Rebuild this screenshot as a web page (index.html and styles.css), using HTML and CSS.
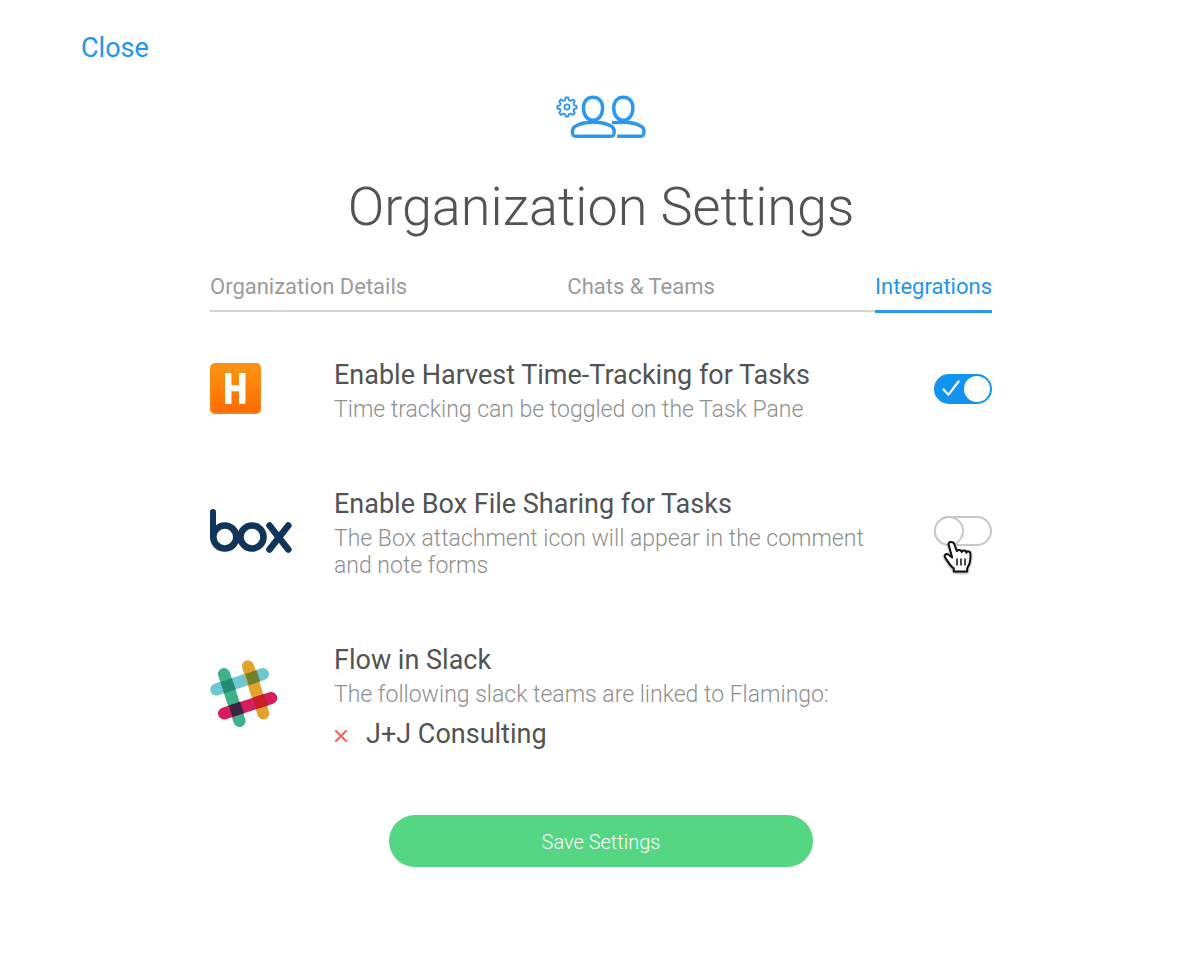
FILE: index.html
```html
<!DOCTYPE html>
<html lang="en">
<head>
  <meta charset="UTF-8" />
  <meta name="viewport" content="width=device-width, initial-scale=1.0"/>
  <title>Organization Settings</title>
  <link rel="stylesheet" href="styles.css">
</head>
<body>
  <a class="close" href="#">Close</a>

  <div class="container">
    <header class="header">
      <svg class="header-icon" width="92" height="46" viewBox="555 94 92 46" fill="none" stroke="#2b97ee" stroke-width="3.400" stroke-linecap="round" stroke-linejoin="round" aria-hidden="true">
        <!-- gear -->
        <path stroke-width="1.8" d="M565.8 97.500h2.400l.7 2.700 1.700.7 2.300-1.400 1.900 1.900-1.400 2.300.7 1.700 2.500.6v2.400l-2.500.6-.7 1.700 1.400 2.300-1.900 1.900-2.300-1.400-1.700.7-.7 2.300h-2.400l-.7-2.300-1.700-.7-2.300 1.400-1.900-1.900 1.400-2.300-.7-1.700-2.500-.6v-2.400l2.500-.6.7-1.700-1.400-2.300 1.900-1.900 2.300 1.400 1.700-.7z"/>
        <circle cx="567" cy="107" r="2.600" stroke-width="1.700"/>
        <!-- people -->
        <path d="M593 97.200c5.700 0 9.600 4.200 9.600 10.600 0 7-3.500 12.400-9.600 12.400s-9.600-5.400-9.600-12.400c0-6.400 3.900-10.600 9.600-10.600z"/>
        <path d="M623.300 97.200c5.700 0 9.600 4.200 9.600 10.600 0 7-3.500 12.400-9.600 12.400s-9.600-5.400-9.600-12.400c0-6.400 3.900-10.600 9.600-10.600z"/>
        <path d="M593.300 122.200c-8 0-14.500 1.800-18.300 4.200-2.200 1.500-2.600 3-2.600 5.400 0 3.400.6 4.500 3.600 4.500h34.600c3 0 3.600-1.100 3.600-4.500 0-2.400-.4-3.900-2.600-5.400-3.800-2.400-10.300-4.200-18.300-4.200z"/>
        <path stroke-linecap="butt" d="M612 122.300c1.500.3 3.200.4 5 .2 2-.2 4.200-.3 6.300-.3 8 0 14.300 1.800 18.100 4.200 2.200 1.500 2.600 3 2.600 5.400 0 3.400-.6 4.500-3.600 4.500H617.200"/>
      </svg>
      <h1>Organization Settings</h1>
    </header>

    <nav class="tabs">
      <a class="tab" href="#">Organization Details</a>
      <a class="tab" href="#">Chats &amp; Teams</a>
      <a class="tab active" href="#">Integrations</a>
    </nav>

    <form class="settings">
      <!-- Harvest -->
      <section class="row">
        <div class="logo">
          <svg width="51" height="51" viewBox="0 0 51 51" role="img" aria-label="Harvest">
            <defs>
              <linearGradient id="harvest" x1="0" y1="0" x2="0" y2="1">
                <stop offset="0" stop-color="#fb9713"/>
                <stop offset="1" stop-color="#fc6a03"/>
              </linearGradient>
            </defs>
            <rect width="51" height="51" rx="5" fill="url(#harvest)"/>
            <rect x="1" y="1" width="49" height="49" rx="4" fill="none" stroke="#f98b1d" stroke-width="1"/>
            <g fill="#fff">
              <rect x="15" y="10" width="6.500" height="31" rx="1"/>
              <rect x="29" y="10" width="6.500" height="31" rx="1"/>
              <rect x="20" y="22.300" width="11" height="6"/>
            </g>
          </svg>
        </div>
        <div class="info">
          <h2><label for="harvestToggle">Enable Harvest Time-Tracking for Tasks</label></h2>
          <p>Time tracking can be toggled on the Task Pane</p>
        </div>
        <div class="switch">
          <input type="checkbox" id="harvestToggle" checked>
          <svg class="check" width="18" height="16" viewBox="0 0 18 16" fill="none" stroke="#fff" stroke-width="2.200" stroke-linecap="round" stroke-linejoin="round" aria-hidden="true"><path d="M1.500 9.500l5 5.200L16.500 1.500"/></svg>
        </div>
      </section>

      <!-- Box -->
      <section class="row">
        <div class="logo">
          <svg width="82" height="44" viewBox="0 0 82 44" fill="none" stroke="#113459" stroke-width="6.600" stroke-linecap="round" role="img" aria-label="Box">
            <path stroke-width="6" d="M3 3v25"/>
            <circle cx="14.800" cy="28" r="11.500"/>
            <circle cx="42" cy="28" r="11.500"/>
            <path d="M59.500 16.500L78.300 40.500M78.300 16.500L59.500 40.500"/>
          </svg>
        </div>
        <div class="info">
          <h2><label for="boxToggle">Enable Box File Sharing for Tasks</label></h2>
          <p>The Box attachment icon will appear in the comment and note forms</p>
        </div>
        <div class="switch">
          <input type="checkbox" id="boxToggle">
          <svg class="pointer" width="32" height="36" viewBox="0 0 32 36" aria-hidden="true">
            <path d="M8.800 2C7 2 6.300 3.500 6.800 5.200l3.400 12.300-3.600-2.700c-2.400-1.700-5 .2-3.400 2.800l4.600 6.800c1 1.600 2.600 3 4 4v3h13.400v-3.200c2-3 3.200-6.200 3.200-9.600v-5c0-2.600-3.600-3-4-.8-.3-2.800-4.200-3-4.700-.8-.6-2.500-4-2.600-4.800-.8L12 3.700C11.500 2.500 10.400 2 8.800 2z" fill="#fff" stroke="#111" stroke-width="2" stroke-linejoin="round"/>
            <path d="M15 18.500v7M19 18.500v7M23 18.500v7" stroke="#111" stroke-width="1.500" fill="none"/>
          </svg>
        </div>
      </section>

      <!-- Slack -->
      <section class="row">
        <div class="logo">
          <svg width="68" height="68" viewBox="0 0 68 68" role="img" aria-label="Slack">
            <g fill="none" stroke-width="12" stroke-linecap="round">
              <path stroke="#6fc8d1" d="M6.300 29.500L53 14"/>
              <path stroke="#3db28a" d="M14 14L29.500 61"/>
              <path stroke="#e2a32e" d="M38 6.300L53.300 53.500"/>
              <path stroke="#d71e5c" d="M14 53.500L61.300 38"/>
            </g>
            <path fill="#238a74" d="M10.500 22l11.400-3.800 3.800 11.400-11.400 3.800z"/>
            <path fill="#728130" d="M35 13.900l11.400-3.800 3.800 11.400-11.400 3.800z"/>
            <path fill="#39253f" d="M18.700 45.600l11.400-3.800 3.800 11.400-11.400 3.800z"/>
            <path fill="#c81f26" d="M42.900 37.700l11.400-3.800 3.800 11.400-11.400 3.800z"/>
          </svg>
        </div>
        <div class="info">
          <h2>Flow in Slack</h2>
          <p>The following slack teams are linked to Flamingo:</p>
          <ul class="teams">
            <li>
              <button type="button" class="remove" aria-label="Remove J+J Consulting">
                <svg width="14" height="14" viewBox="0 0 14 14" stroke="#f4605c" stroke-width="2" stroke-linecap="round"><path d="M2 2l10 10M12 2L2 12"/></svg>
              </button>
              <span>J+J Consulting</span>
            </li>
          </ul>
        </div>
      </section>

      <button type="submit" class="save">Save Settings</button>
    </form>
  </div>
</body>
</html>
```
FILE: styles.css
```css
* { box-sizing: border-box; }
body { font-family: Roboto, Arial, sans-serif; background: #fff; color: #525354; margin: 0; padding: 32px 24px 40px 26px; }
h1, h2, p, ul { margin: 0; padding: 0; }
a { color: #2196f0; text-decoration: none; }
.close { display: block; width: max-content; margin-left: 55px; font-size: 27px; line-height: 32px; }
.container { max-width: 782px; margin: 30px auto 0; }

.header { display: flex; flex-direction: column; align-items: center; }
.header h1 { margin-top: 32px; font-size: 54px; line-height: 70px; font-weight: 300; text-align: center; }

.tabs { display: flex; justify-content: space-between; margin-top: 29px; box-shadow: inset 0 -2px #d6d6d6; }
.tab { padding-bottom: 7px; font-size: 22px; line-height: 32px; color: #9b9b9b; }
.tab.active { color: #2196f0; border-bottom: 3px solid #2b97ee; margin-bottom: -1px; }

.settings { display: flex; flex-direction: column; gap: 66px; margin-top: 48px; }
.row { display: flex; align-items: center; }
.logo { width: 124px; flex: none; padding-bottom: 6px; }
.logo svg { display: block; }
.info { flex: 1; }
.info h2 { font-size: 27px; line-height: 30px; font-weight: 400; }
.info p { margin-top: 6px; font-size: 23px; line-height: 27px; font-weight: 300; color: #8f8f8f; }

.switch { position: relative; flex: none; margin-left: 48px; padding-bottom: 6px; }
.switch input { display: block; appearance: none; width: 58px; height: 30px; margin: 0; border: 2px solid #c8c8c8; border-radius: 15px; background: #fff; cursor: pointer; }
.switch input::before { content: ""; display: block; box-sizing: border-box; width: 30px; height: 30px; margin: -2px; border: 2px solid #c8c8c8; border-radius: 50%; background: #fff; }
.switch input:checked { border-color: #1294ee; background: #1294ee; }
.switch input:checked::before { width: 26px; height: 26px; margin: 0 0 0 28px; border: none; }
.check { position: absolute; left: 8px; top: 6px; pointer-events: none; }
.pointer { position: absolute; left: 8px; top: 24px; pointer-events: none; filter: drop-shadow(0 1px 1px rgba(0, 0, 0, 0.4)); }

.teams { list-style: none; margin-top: 11px; }
.teams li { display: flex; align-items: center; gap: 18px; font-size: 27px; line-height: 30px; }
.remove { display: flex; padding: 4px 0 0; border: none; background: none; cursor: pointer; }

.save { align-self: center; width: 100%; max-width: 424px; height: 52px; padding: 2px 0 0; border: none; border-radius: 26px; background: #54d683; color: #fff; font-family: inherit; font-size: 20px; font-weight: 300; cursor: pointer; }
```
